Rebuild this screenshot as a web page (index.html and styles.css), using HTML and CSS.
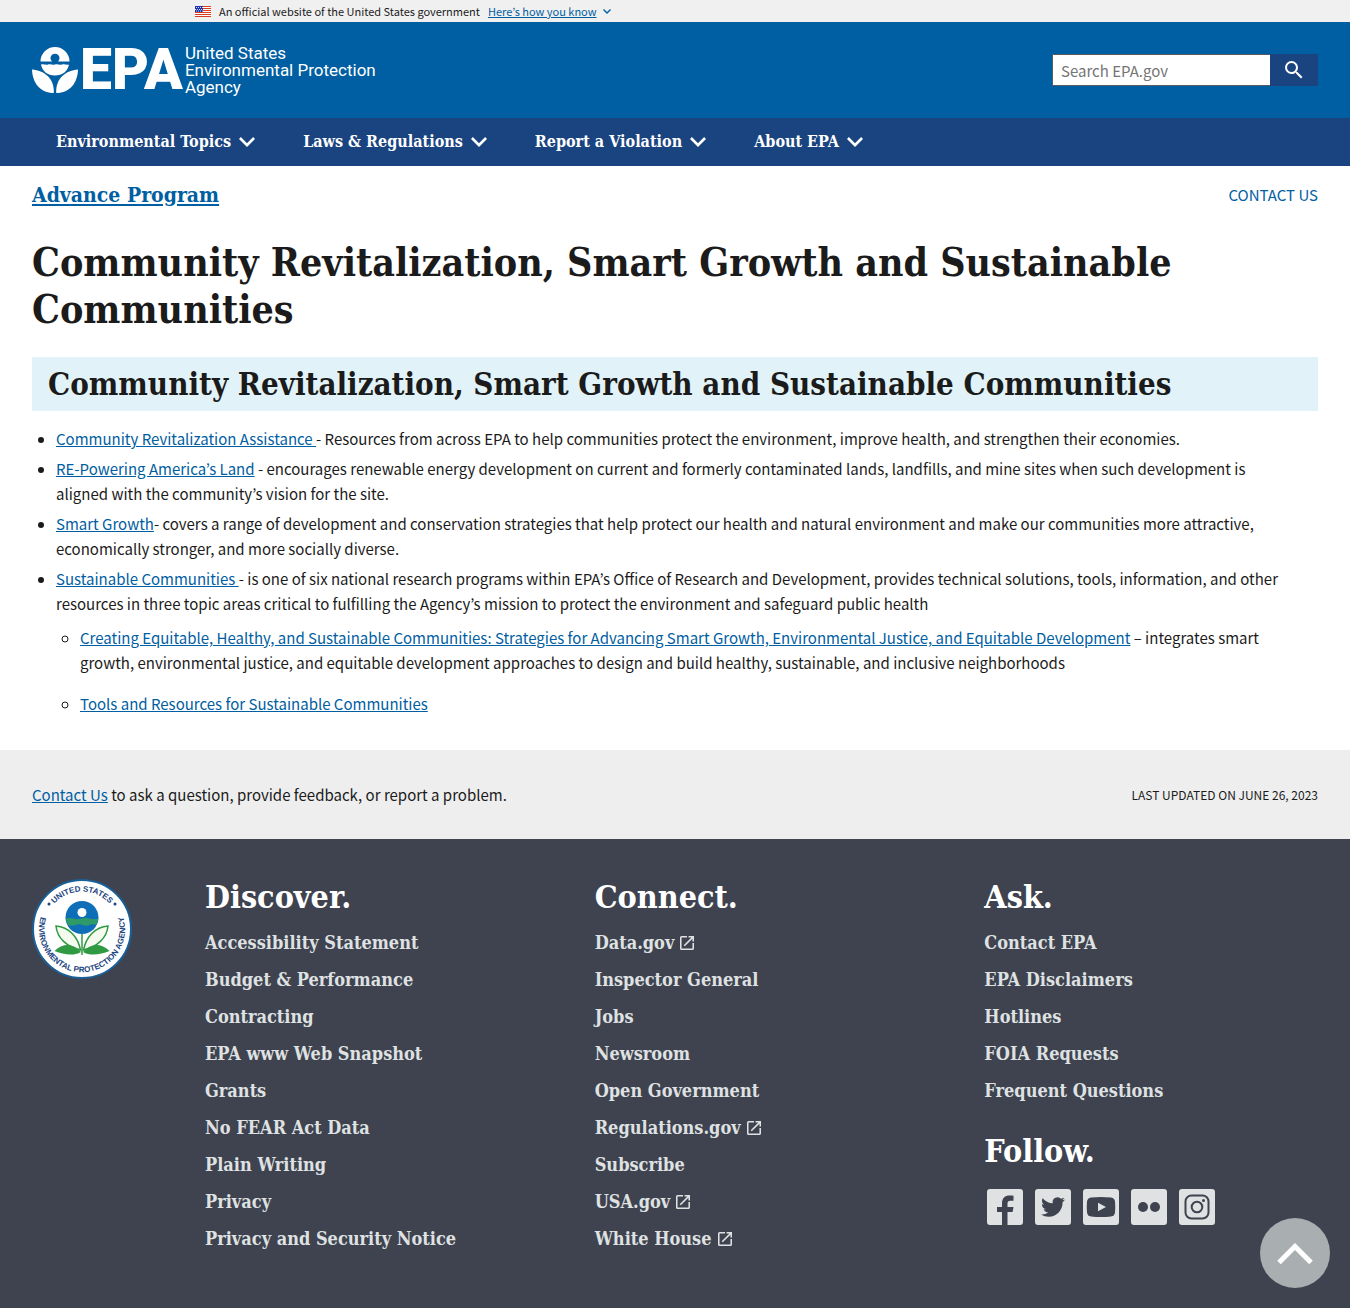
FILE: index.html
```html
<!DOCTYPE html>
<html lang="en">
<head>
<meta charset="utf-8">
<meta name="viewport" content="width=device-width, initial-scale=1">
<title>Community Revitalization, Smart Growth and Sustainable Communities | US EPA</title>
<link rel="stylesheet" href="styles.css">
</head>
<body>
<svg class="sprite" aria-hidden="true">
  <symbol id="chevron" viewBox="6 8.5 12 7.5"><path d="M16.59 8.59 12 13.17 7.41 8.59 6 10l6 6 6-6z"/></symbol>
  <symbol id="launch" viewBox="3 3 18 18"><path d="M19 19H5V5h7V3H5a2 2 0 0 0-2 2v14a2 2 0 0 0 2 2h14c1.1 0 2-.9 2-2v-7h-2v7zM14 3v2h3.59l-9.83 9.83 1.41 1.41L19 6.41V10h2V3h-7z"/></symbol>
</svg>

<section class="banner" aria-label="Official website of the United States government">
  <div class="banner-inner">
    <svg class="flag" viewBox="0 0 16 11" aria-hidden="true">
      <rect width="16" height="11" fill="#fff"/>
      <path d="M0 .5h16M0 2.5h16M0 4.5h16M0 6.5h16M0 8.5h16M0 10.5h16" stroke="#db3e1f"/>
      <rect width="8" height="6" fill="#1e33b1"/>
      <path d="M1 1.5h7M0 3.500h7M1 5h7" stroke="#fff" stroke-width=".8" stroke-dasharray="1 1"/>
    </svg>
    <span>An official website of the United States government</span>
    <button class="banner-button" type="button"><span>Here’s how you know</span><svg aria-hidden="true"><use href="#chevron"/></svg></button>
  </div>
</section>

<header>
  <div class="masthead">
    <a class="logo" href="#" aria-label="EPA home">
      <svg class="flower" viewBox="0 0 46 46" aria-hidden="true">
        <path d="M8.500 14.500A14.500 14.500 0 0 1 37.500 14.500H26A4.500 4.500 0 1 0 20 14.500Z"/>
        <path d="M9 17.500c2.500-1.200 4.500 1 7 0s4.500 1 7 0 4.500 1 7 0 4.500 1 7 0C35.500 24.500 30.500 28.500 23 28.500S10.500 24.500 9 17.500Z"/>
        <path d="M0 22.500C12 23.500 22.500 31 21.800 46 8 46 .5 36 0 22.500Z"/>
        <path d="M46 22.500C34 23.500 23.500 31 24.200 46 38 46 45.500 36 46 22.500Z"/>
      </svg>
      <span class="wordmark">EPA</span>
      <span class="agency">United States<br>Environmental Protection<br>Agency</span>
    </a>
    <form class="search" role="search" onsubmit="return false">
      <input type="search" aria-label="Search" placeholder="Search EPA.gov">
      <button type="submit" aria-label="Search"><svg viewBox="0 0 24 24" aria-hidden="true"><path d="M15.500 14h-.79l-.28-.27A6.471 6.471 0 0 0 16 9.500 6.500 6.500 0 1 0 9.500 16c1.610 0 3.090-.59 4.230-1.570l.27.28v.79l5 4.990L20.490 19l-4.990-5zm-6 0C7.010 14 5 11.990 5 9.500S7.010 5 9.500 5 14 7.010 14 9.500 11.990 14 9.500 14z"/></svg></button>
    </form>
  </div>
  <nav class="main-nav" aria-label="Main">
    <button type="button">Environmental Topics<svg aria-hidden="true"><use href="#chevron"/></svg></button>
    <button type="button">Laws &amp; Regulations<svg aria-hidden="true"><use href="#chevron"/></svg></button>
    <button type="button">Report a Violation<svg aria-hidden="true"><use href="#chevron"/></svg></button>
    <button type="button">About EPA<svg aria-hidden="true"><use href="#chevron"/></svg></button>
  </nav>
</header>

<main>
  <div class="area-bar">
    <a class="area-title" href="#">Advance Program</a>
    <a class="area-contact" href="#">CONTACT US</a>
  </div>
  <h1>Community Revitalization, Smart Growth and Sustainable Communities</h1>
  <h2 class="highlight">Community Revitalization, Smart Growth and Sustainable Communities</h2>
  <ul class="programs">
    <li><a href="#">Community Revitalization Assistance </a>- Resources from across EPA to help communities protect the environment, improve health, and strengthen their economies.</li>
    <li><a href="#">RE-Powering America’s Land</a> - encourages renewable energy development on current and formerly contaminated lands, landfills, and mine sites when such development is aligned with the community’s vision for the site.</li>
    <li><a href="#">Smart Growth</a>- covers a range of development and conservation strategies that help protect our health and natural environment and make our communities more attractive, economically stronger, and more socially diverse.</li>
    <li><a href="#">Sustainable Communities </a>- is one of six national research programs within EPA’s Office of Research and Development, provides technical solutions, tools, information, and other resources in three topic areas critical to fulfilling the Agency’s mission to protect the environment and safeguard public health
      <ul>
        <li><a href="#">Creating Equitable, Healthy, and Sustainable Communities: Strategies for Advancing Smart Growth, Environmental Justice, and Equitable Development</a> – integrates smart growth, environmental justice, and equitable development approaches to design and build healthy, sustainable, and inclusive neighborhoods</li>
        <li><a href="#">Tools and Resources for Sustainable Communities</a></li>
      </ul>
    </li>
  </ul>
</main>

<div class="page-meta">
  <p><a href="#">Contact Us</a> to ask a question, provide feedback, or report a problem.</p>
  <p class="updated">LAST UPDATED ON JUNE 26, 2023</p>
</div>

<footer>
  <svg class="seal" viewBox="0 0 100 100" role="img" aria-label="United States Environmental Protection Agency">
    <defs>
      <path id="arc-top" d="M12.500 50a37.500 37.500 0 0 1 75 0"/>
      <path id="arc-bottom" d="M14.100 26.500A43 43 0 1 0 85.900 26.500"/>
    </defs>
    <circle cx="50" cy="50" r="49" fill="#fff" stroke="#1a5f98" stroke-width="2"/>
    <g class="seal-text">
      <text text-anchor="middle"><textPath href="#arc-top" startOffset="50%">UNITED STATES</textPath></text>
      <text text-anchor="middle"><textPath href="#arc-bottom" startOffset="50%">ENVIRONMENTAL PROTECTION AGENCY</textPath></text>
    </g>
    <circle cx="17" cy="25" r="1.500" fill="#1a4480"/><circle cx="83" cy="25" r="1.500" fill="#1a4480"/>
    <circle cx="50" cy="38.500" r="16.500" fill="#0e6eb8"/>
    <path d="M33.500 39.500q4-1 8 0t8 0 8 0 9 0l-2 6.500q-4-1.500-7 0t-7 0-7 0-7.500 0z" fill="#2e9a68"/>
    <circle cx="50" cy="33.500" r="4.500" fill="#fff"/>
    <path d="M50 55v21" stroke="#2f9a41" stroke-width="1.500"/>
    <g fill="#f4faee" stroke="#2f9a41" stroke-width="1.500">
      <path d="M48.500 71C46 58 37 48 24 47c1 12 11 21 24.500 24Z"/>
      <path d="M51.500 71C54 58 63 48 76 47c-1 12-11 21-24.500 24Z"/>
    </g>
    <path d="M49 73C41 64 31 64 22.500 72 32 76 42 77 49 73ZM51 73C59 64 69 64 77.500 72 68 76 58 77 51 73Z" fill="#2f9a41"/>
  </svg>
  <section>
    <h2>Discover.</h2>
    <ul>
      <li><a href="#">Accessibility Statement</a></li>
      <li><a href="#">Budget &amp; Performance</a></li>
      <li><a href="#">Contracting</a></li>
      <li><a href="#">EPA www Web Snapshot</a></li>
      <li><a href="#">Grants</a></li>
      <li><a href="#">No FEAR Act Data</a></li>
      <li><a href="#">Plain Writing</a></li>
      <li><a href="#">Privacy</a></li>
      <li><a href="#">Privacy and Security Notice</a></li>
    </ul>
  </section>
  <section>
    <h2>Connect.</h2>
    <ul>
      <li><a href="#">Data.gov<svg aria-hidden="true"><use href="#launch"/></svg></a></li>
      <li><a href="#">Inspector General</a></li>
      <li><a href="#">Jobs</a></li>
      <li><a href="#">Newsroom</a></li>
      <li><a href="#">Open Government</a></li>
      <li><a href="#">Regulations.gov<svg aria-hidden="true"><use href="#launch"/></svg></a></li>
      <li><a href="#">Subscribe</a></li>
      <li><a href="#">USA.gov<svg aria-hidden="true"><use href="#launch"/></svg></a></li>
      <li><a href="#">White House<svg aria-hidden="true"><use href="#launch"/></svg></a></li>
    </ul>
  </section>
  <section>
    <h2>Ask.</h2>
    <ul>
      <li><a href="#">Contact EPA</a></li>
      <li><a href="#">EPA Disclaimers</a></li>
      <li><a href="#">Hotlines</a></li>
      <li><a href="#">FOIA Requests</a></li>
      <li><a href="#">Frequent Questions</a></li>
    </ul>
    <h2>Follow.</h2>
    <div class="social">
      <a href="#" aria-label="Facebook"><svg viewBox="0 0 36 36" aria-hidden="true"><rect width="36" height="36" rx="3"/><path class="ink" d="M15 36V23h-5v-5h5v-3.500C15 9 18 6.500 22.500 6.500c1.700 0 3 .1 4 .3v5h-3c-2.500 0-3 1.200-3 3V18h6l-.9 5h-5.100v13z"/></svg></a>
      <a href="#" aria-label="Twitter"><svg viewBox="0 0 36 36" aria-hidden="true"><rect width="36" height="36" rx="3"/><path class="ink" transform="translate(6 6)" d="M23.953 4.570a10 10 0 01-2.825.775 4.958 4.958 0 002.163-2.723c-.951.555-2.005.959-3.127 1.184a4.920 4.920 0 00-8.384 4.482C7.690 8.095 4.067 6.130 1.640 3.162a4.822 4.822 0 00-.666 2.475c0 1.710.87 3.213 2.188 4.096a4.904 4.904 0 01-2.228-.616v.06a4.923 4.923 0 003.946 4.827 4.996 4.996 0 01-2.212.085 4.936 4.936 0 004.604 3.417 9.867 9.867 0 01-6.102 2.105c-.39 0-.779-.023-1.170-.067a13.995 13.995 0 007.557 2.209c9.053 0 13.998-7.496 13.998-13.985 0-.21 0-.42-.015-.63A9.935 9.935 0 0024 4.590z"/></svg></a>
      <a href="#" aria-label="YouTube"><svg viewBox="0 0 36 36" aria-hidden="true"><rect width="36" height="36" rx="3"/><path class="ink" d="M8 8.500Q18 7.500 28 8.500q3.500.5 4 4 .5 5.500 0 11-.5 3.500-4 4-10 1-20 0-3.500-.5-4-4-.5-5.500 0-11 .5-3.500 4-4Z"/><path d="m15 13.700 8 4.300-8 4.300z"/></svg></a>
      <a href="#" aria-label="Flickr"><svg viewBox="0 0 36 36" aria-hidden="true"><rect width="36" height="36" rx="3"/><circle class="ink" cx="12" cy="18" r="5"/><circle class="ink" cx="24" cy="18" r="5"/></svg></a>
      <a href="#" aria-label="Instagram"><svg viewBox="0 0 36 36" aria-hidden="true"><rect width="36" height="36" rx="3"/><g class="line"><rect x="6.500" y="6.500" width="23" height="23" rx="6"/><circle cx="18" cy="18" r="5.300"/></g><circle class="ink" cx="24.500" cy="11.500" r="1.500"/></svg></a>
    </div>
  </section>
</footer>

<a class="back-to-top" href="#" aria-label="Back to top"><svg viewBox="0 0 36 23" aria-hidden="true"><path d="m2 20.500 16-16 16 16"/></svg></a>
</body>
</html>
```
FILE: styles.css
```css
:root {
  --sans: "Noto Sans CJK KR", "Open Sans", sans-serif;
  --serif: "DejaVu Serif Condensed", "DejaVu Serif", serif;
  --link: #005ea2;
  --navy: #1a4480;
  --ink: #1b1b1b;
  --slate: #3e434f;
}

* {
  box-sizing: border-box;
}

body {
  margin: 0;
  font: 15px/25px var(--sans);
  color: var(--ink);
  background: #fff;
}

a {
  color: var(--link);
}

button {
  border: 0;
  padding: 0;
  background: none;
  font: inherit;
  color: inherit;
  cursor: pointer;
}

svg {
  display: block;
  fill: currentColor;
}

.sprite {
  position: absolute;
  width: 0;
  height: 0;
}

/* Government banner */
.banner {
  background: #f0f0f0;
  font-size: 11px;
  line-height: 22px;
}

.banner-inner {
  display: flex;
  align-items: center;
  gap: 8px;
  max-width: 1024px;
  margin: 0 auto;
  padding: 0 32px;
}

.flag {
  width: 16px;
  height: 11px;
}

.banner-button {
  display: flex;
  align-items: center;
  gap: 6px;
  color: var(--link);
}

.banner-button span {
  text-decoration: underline;
}

.banner-button svg {
  width: 8px;
  height: 5px;
}

/* Masthead */
.masthead {
  display: flex;
  align-items: center;
  justify-content: space-between;
  height: 96px;
  padding: 0 32px;
  background: var(--link);
}

.logo {
  display: flex;
  align-items: center;
  color: #fff;
  text-decoration: none;
}

.flower {
  width: 46px;
  height: 46px;
}

.wordmark {
  padding: 0 2px;
  font: 900 57px/48px Roboto, "Noto Sans", sans-serif;
}

.agency {
  font: 17px/17px Roboto, "Liberation Sans", sans-serif;
}

.search {
  display: flex;
}

.search input {
  width: 218px;
  height: 32px;
  padding: 0 8px;
  border: 1px solid #565c65;
  border-right: 0;
  border-radius: 0;
  background: #fff;
  font: 15px/20px var(--sans);
  appearance: none;
}

.search input::placeholder {
  color: #757575;
}

.search button {
  display: grid;
  place-items: center;
  width: 48px;
  height: 32px;
  background: var(--navy);
  color: #fff;
}

.search svg {
  width: 24px;
  height: 24px;
}

/* Main navigation */
.main-nav {
  display: flex;
  gap: 48px;
  height: 48px;
  padding: 0 56px;
  background: var(--navy);
}

.main-nav button {
  display: flex;
  align-items: center;
  gap: 8px;
  font: bold 16px/24px var(--serif);
  color: #fff;
}

.main-nav svg {
  width: 16px;
  height: 10px;
}

/* Page content */
main {
  padding: 16px 32px 29px;
}

.area-bar {
  display: flex;
  align-items: center;
  justify-content: space-between;
}

.area-title {
  font: bold 21px/24px var(--serif);
}

.area-contact {
  text-decoration: none;
}

h1,
h2 {
  margin: 0;
  font-family: var(--serif);
  font-weight: bold;
}

h1 {
  margin: 32px 0 24px;
  font-size: 39px;
  line-height: 47px;
}

.highlight {
  padding: 8px 16px;
  background: #e1f3f8;
  font-size: 31px;
  line-height: 38px;
}

.programs {
  margin: 15px 0 0;
  padding: 0 24px;
}

.programs li {
  margin-bottom: 5px;
}

.programs ul {
  margin-top: 9px;
  padding-left: 24px;
}

.programs ul li {
  margin-bottom: 16px;
}

.programs ul li:last-child {
  margin-bottom: 0;
}

/* Contact and date strip */
.page-meta {
  display: flex;
  align-items: center;
  justify-content: space-between;
  padding: 32px;
  background: #eee;
}

.page-meta p {
  margin: 0;
}

.page-meta .updated {
  font-size: 12px;
}

/* Footer */
footer {
  display: grid;
  grid-template-columns: 117px repeat(3, 1fr);
  column-gap: 56px;
  padding: 40px 32px 51px;
  background: var(--slate);
  color: #fff;
}

.seal {
  width: 100px;
  height: 100px;
}

.seal-text {
  fill: var(--navy);
  font: bold 8px "Liberation Sans", sans-serif;
}

footer h2 {
  font-size: 32px;
  line-height: 36px;
}

footer ul {
  margin: 9px 0 24px;
  padding: 0;
  list-style: none;
}

footer li {
  display: flex;
}

footer li a {
  display: flex;
  align-items: center;
  gap: 6px;
  font: bold 18px/37px var(--serif);
  color: #dfe1e2;
  text-decoration: none;
}

footer li svg {
  width: 14px;
  height: 14px;
}

.social {
  display: flex;
  gap: 12px;
  padding: 20px 3px 0;
}

.social a {
  color: #dfe1e2;
}

.social svg {
  width: 36px;
  height: 36px;
}

.social .ink {
  fill: var(--slate);
}

.social .line {
  fill: none;
  stroke: var(--slate);
  stroke-width: 2px;
}

.back-to-top {
  position: fixed;
  right: 20px;
  bottom: 20px;
  display: grid;
  place-items: center;
  width: 70px;
  height: 70px;
  border-radius: 50%;
  background: #a9aeb1;
}

.back-to-top svg {
  width: 36px;
  height: 23px;
  fill: none;
  stroke: #fff;
  stroke-width: 5px;
}
```
